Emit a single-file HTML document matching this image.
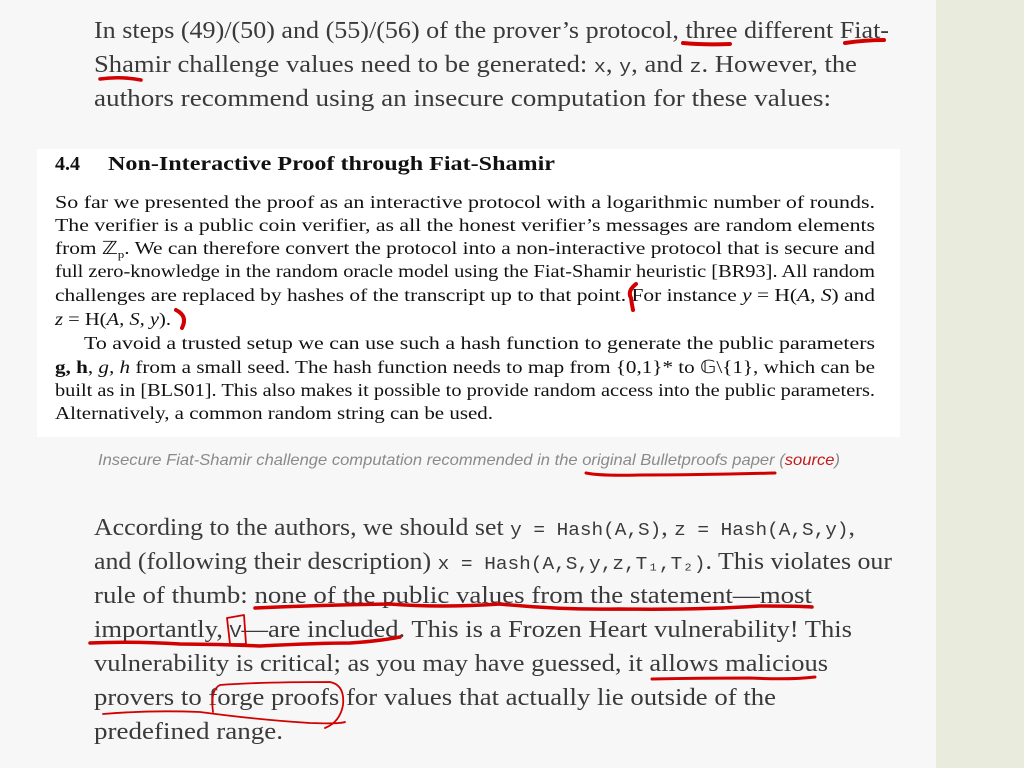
<!DOCTYPE html>
<html><head><meta charset="utf-8"><style>
html,body{margin:0;padding:0;width:1024px;height:768px;overflow:hidden;background:#f7f7f7}
svg{display:block}
</style></head><body>
<svg width="1024" height="768" viewBox="0 0 1024 768" xmlns="http://www.w3.org/2000/svg">
<rect x="0" y="0" width="1024" height="768" fill="#f7f7f7"/>
<rect x="936" y="0" width="88" height="768" fill="#e9ecdc"/>
<rect x="37" y="149" width="863" height="288" fill="#ffffff"/>
<g font-family="Liberation Serif, serif" font-size="24" fill="#3a3a3a">
<text x="94" y="38" textLength="795" lengthAdjust="spacingAndGlyphs">In steps (49)/(50) and (55)/(56) of the prover’s protocol, three different Fiat-</text>
<text x="94" y="72" textLength="763" lengthAdjust="spacingAndGlyphs">Shamir challenge values need to be generated: <tspan font-family="Liberation Mono, monospace" font-size="18">x</tspan>, <tspan font-family="Liberation Mono, monospace" font-size="18">y</tspan>, and <tspan font-family="Liberation Mono, monospace" font-size="18">z</tspan>. However, the</text>
<text x="94" y="106" textLength="737" lengthAdjust="spacingAndGlyphs">authors recommend using an insecure computation for these values:</text>
<text x="94" y="535" textLength="761" lengthAdjust="spacingAndGlyphs">According to the authors, we should set <tspan font-family="Liberation Mono, monospace" font-size="18">y = Hash(A,S)</tspan>, <tspan font-family="Liberation Mono, monospace" font-size="18">z = Hash(A,S,y)</tspan>,</text>
<text x="94" y="569" textLength="798" lengthAdjust="spacingAndGlyphs">and (following their description) <tspan font-family="Liberation Mono, monospace" font-size="18">x = Hash(A,S,y,z,T₁,T₂)</tspan>. This violates our</text>
<text x="94" y="603" textLength="718" lengthAdjust="spacingAndGlyphs">rule of thumb: none of the public values from the statement—most</text>
<text x="94" y="637" textLength="758" lengthAdjust="spacingAndGlyphs">importantly, <tspan font-family="Liberation Mono, monospace" font-size="18">V</tspan>—are included. This is a Frozen Heart vulnerability! This</text>
<text x="94" y="671" textLength="734" lengthAdjust="spacingAndGlyphs">vulnerability is critical; as you may have guessed, it allows malicious</text>
<text x="94" y="705" textLength="682" lengthAdjust="spacingAndGlyphs">provers to forge proofs for values that actually lie outside of the</text>
<text x="94" y="739" textLength="189" lengthAdjust="spacingAndGlyphs">predefined range.</text>
</g>
<g font-family="Liberation Serif, serif" fill="#111">
<text x="55" y="170" font-size="20" font-weight="bold">4.4</text>
<text x="108" y="170" font-size="20" font-weight="bold" textLength="447" lengthAdjust="spacingAndGlyphs">Non-Interactive Proof through Fiat-Shamir</text>
<g font-size="18">
<text x="55" y="208" textLength="820" lengthAdjust="spacingAndGlyphs">So far we presented the proof as an interactive protocol with a logarithmic number of rounds.</text>
<text x="55" y="231" textLength="820" lengthAdjust="spacingAndGlyphs">The verifier is a public coin verifier, as all the honest verifier’s messages are random elements</text>
<text x="55" y="254" textLength="820" lengthAdjust="spacingAndGlyphs">from ℤ<tspan font-size="11" dy="4">p</tspan><tspan dy="-4">. We can therefore convert the protocol into a non-interactive protocol that is secure and</tspan></text>
<text x="55" y="277" textLength="820" lengthAdjust="spacingAndGlyphs">full zero-knowledge in the random oracle model using the Fiat-Shamir heuristic [BR93]. All random</text>
<text x="55" y="301" textLength="820" lengthAdjust="spacingAndGlyphs">challenges are replaced by hashes of the transcript up to that point. For instance <tspan font-style="italic">y</tspan> = H(<tspan font-style="italic">A, S</tspan>) and</text>
<text x="55" y="325" textLength="116" lengthAdjust="spacingAndGlyphs"><tspan font-style="italic">z</tspan> = H(<tspan font-style="italic">A, S, y</tspan>).</text>
<text x="84" y="349" textLength="791" lengthAdjust="spacingAndGlyphs">To avoid a trusted setup we can use such a hash function to generate the public parameters</text>
<text x="55" y="373" textLength="820" lengthAdjust="spacingAndGlyphs"><tspan font-weight="bold">g, h</tspan>, <tspan font-style="italic">g, h</tspan> from a small seed. The hash function needs to map from {0,1}* to 𝔾\{1}, which can be</text>
<text x="55" y="396" textLength="820" lengthAdjust="spacingAndGlyphs">built as in [BLS01]. This also makes it possible to provide random access into the public parameters.</text>
<text x="55" y="419" textLength="438" lengthAdjust="spacingAndGlyphs">Alternatively, a common random string can be used.</text>
</g>
</g>
<text x="98" y="465" font-family="Liberation Sans, sans-serif" font-size="16" font-style="italic" fill="#8a8a8a" textLength="742" lengthAdjust="spacingAndGlyphs">Insecure Fiat-Shamir challenge computation recommended in the original Bulletproofs paper (<tspan fill="#c41a1a">source</tspan>)</text>
<g fill="none" stroke="#d20000" stroke-linecap="round" stroke-linejoin="round">
<path d="M683 43 Q705 45 730 44" stroke-width="4"/>
<path d="M845 43 Q865 40 884 40" stroke-width="4"/>
<path d="M100 79 Q120 76 141 80" stroke-width="3.5"/>
<path d="M631 298 Q627 291 636 284 M631 298 Q632 305 633 310" stroke-width="4"/>
<path d="M176 310 Q188 316 182 328" stroke-width="4"/>
<path d="M586 473 Q600 476 640 475 Q700 475 775 473" stroke-width="3"/>
<path d="M255 608 Q320 605 390 604 Q440 608 500 604 Q560 610 620 609 Q700 610 760 606 Q800 606 812 607" stroke-width="3.5"/>
<path d="M90 643 Q130 641 180 644 Q220 644 260 646 Q320 643 350 643 Q380 641 400 637" stroke-width="3.5"/>
<path d="M227 618 L244 615 L246 644 L230 644 Z" stroke-width="1.8"/>
<path d="M652 679 Q700 678 750 678 Q790 680 815 677" stroke-width="3"/>
<path d="M103 714 Q150 710 200 712 Q260 720 310 723 Q340 724 345 722" stroke-width="1.8"/>
<path d="M213 712 Q210 690 220 685 Q260 682 330 682 Q345 685 343 705 Q340 722 325 728" stroke-width="1.8"/>
</g>
</svg>
</body></html>
